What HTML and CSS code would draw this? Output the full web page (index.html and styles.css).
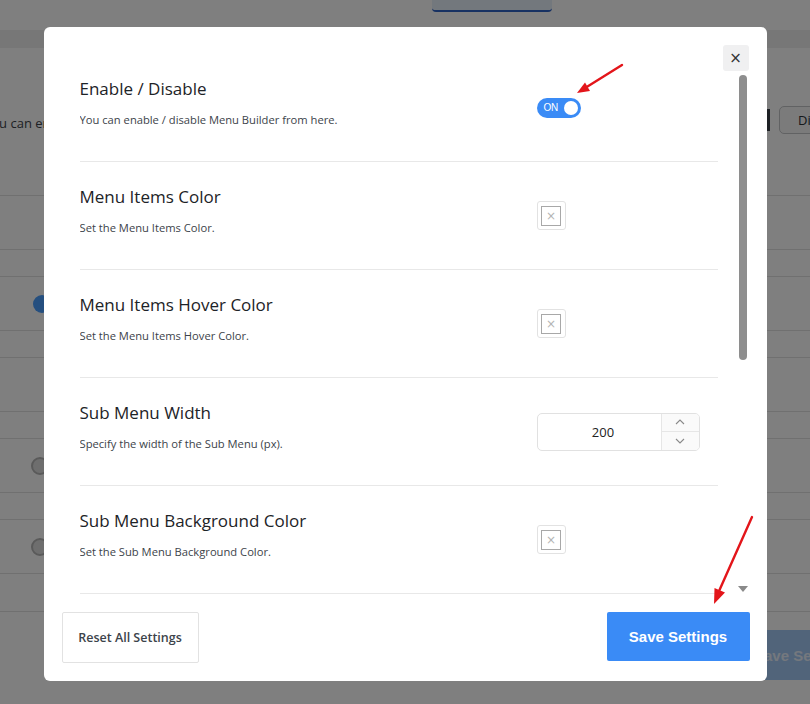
FILE: index.html
```html
<!DOCTYPE html>
<html lang="en">

<head>
  <meta charset="UTF-8" />
  <meta name="viewport" content="width=device-width, initial-scale=1.0" />
  <title>Menu Builder – Settings</title>
  <link rel="stylesheet" href="styles.css">
</head>

<body>
  <!-- admin page behind the modal -->
  <div class="page">
    <div class="topbar"><span class="tab"></span></div>
    <div class="band"></div>
    <div class="intro">
      <p>You can enable</p>
      <span class="edge"></span>
      <button class="bg-btn">Disable</button>
    </div>
    <div class="bg-table">
      <div class="bg-row tall"></div>
      <div class="bg-row short"></div>
      <div class="bg-row tall"><span class="bg-toggle"></span></div>
      <div class="bg-row short"></div>
      <div class="bg-row tall"></div>
      <div class="bg-row short"></div>
      <div class="bg-row tall"><span class="bg-radio"></span></div>
      <div class="bg-row short"></div>
      <div class="bg-row tall"><span class="bg-radio"></span></div>
      <div class="bg-row last"></div>
    </div>
    <div class="bg-footer">
      <button class="bg-save">Save Settings</button>
    </div>
  </div>

  <div class="backdrop">
    <div class="modal">
      <button class="close" aria-label="Close">&times;</button>

      <div class="modal-body">
        <div class="settings">
          <div class="setting">
            <div class="info">
              <h3>Enable / Disable</h3>
              <p>You can enable / disable Menu Builder from here.</p>
            </div>
            <div class="control">
              <span class="toggle"><span class="toggle-label">ON</span><span class="knob"></span></span>
            </div>
          </div>

          <div class="setting">
            <div class="info">
              <h3>Menu Items Color</h3>
              <p>Set the Menu Items Color.</p>
            </div>
            <div class="control">
              <span class="swatch"><span class="swatch-inner">&times;</span></span>
            </div>
          </div>

          <div class="setting">
            <div class="info">
              <h3>Menu Items Hover Color</h3>
              <p>Set the Menu Items Hover Color.</p>
            </div>
            <div class="control">
              <span class="swatch"><span class="swatch-inner">&times;</span></span>
            </div>
          </div>

          <div class="setting">
            <div class="info">
              <h3>Sub Menu Width</h3>
              <p>Specify the width of the Sub Menu (px).</p>
            </div>
            <div class="control">
              <div class="number">
                <span class="number-value">200</span>
                <div class="spin">
                  <span class="spin-btn">
                    <svg width="10" height="6" viewBox="0 0 10 6"><polyline points="1,5 5,1 9,5" fill="none" stroke="#8a8a8a" stroke-width="1.1"/></svg>
                  </span>
                  <span class="spin-btn">
                    <svg width="10" height="6" viewBox="0 0 10 6"><polyline points="1,1 5,5 9,1" fill="none" stroke="#8a8a8a" stroke-width="1.1"/></svg>
                  </span>
                </div>
              </div>
            </div>
          </div>

          <div class="setting">
            <div class="info">
              <h3>Sub Menu Background Color</h3>
              <p>Set the Sub Menu Background Color.</p>
            </div>
            <div class="control">
              <span class="swatch"><span class="swatch-inner">&times;</span></span>
            </div>
          </div>
        </div>

        <div class="scrollbar">
          <span class="thumb"></span>
          <span class="arrow-down"></span>
        </div>
      </div>

      <div class="modal-footer">
        <button class="btn-reset">Reset All Settings</button>
        <button class="btn-save">Save Settings</button>
      </div>
    </div>
  </div>

  <!-- red annotation arrows -->
  <svg class="annotations" width="810" height="704" viewBox="0 0 810 704">
    <line x1="622" y1="65" x2="587.5" y2="86.5" stroke="#e3151a" stroke-width="2.4" stroke-linecap="round" />
    <polygon points="577,93 590,91 585,82.5" fill="#e3151a" />
    <line x1="752" y1="517" x2="719.5" y2="590" stroke="#e3151a" stroke-width="2.4" stroke-linecap="round" />
    <polygon points="714,604 725,592.5 714.5,588" fill="#e3151a" />
  </svg>
</body>

</html>
```

FILE: styles.css
```css
  :root {
    --blue: #3a8bf6;
    --text: #1d2327;
    --muted: #3c434a;
    --line: #e8e8e8;
  }

  * {
    margin: 0;
    padding: 0;
    box-sizing: border-box;
  }

  body {
    font-family: 'Open Sans', 'Noto Sans', sans-serif;
    background-color: #fff;
    color: var(--text);
    width: 810px;
    height: 704px;
    overflow: hidden;
  }

  /* ---------- page behind ---------- */

  .page {
    width: 810px;
    height: 704px;
    overflow: hidden;
  }

  .topbar {
    height: 30px;
    background-color: #fefefe;
  }

  .tab {
    display: block;
    width: 120px;
    height: 12px;
    margin-left: 432px;
    background-color: #e6f0fb;
    border-bottom: 2px solid #2f63c4;
    border-radius: 0 0 4px 4px;
  }

  .band {
    height: 18px;
    background-color: #eeeeee;
  }

  .intro {
    height: 147px;
    display: flex;
    align-items: center;
    padding-bottom: 4px;
    overflow: hidden;
  }

  .intro p {
    margin-left: -16px;
    margin-top: 6px;
    font-size: 13px;
    color: #3c434a;
    white-space: nowrap;
  }

  .edge {
    margin-left: auto;
    width: 3px;
    height: 22px;
    background-color: #3c434a;
  }

  .bg-btn {
    width: 80px;
    margin-left: 9px;
    margin-right: -49px;
    height: 28px;
    padding-left: 18px;
    text-align: left;
    border: 1px solid #c3c4c7;
    border-radius: 5px;
    background-color: #f6f7f7;
    font-family: inherit;
    font-size: 13px;
    color: #2c3338;
  }

  .bg-table {
    border-top: 1px solid #e0e0e0;
  }

  .bg-row {
    display: flex;
    align-items: center;
    border-bottom: 1px solid #e0e0e0;
    padding-left: 31px;
  }

  .bg-row.tall { height: 54px; }
  .bg-row.short { height: 27px; }
  .bg-row.last { height: 38px; }

  .bg-toggle {
    width: 18px;
    height: 18px;
    border-radius: 50%;
    background-color: #4a9eff;
    margin-left: 2px;
  }

  .bg-radio {
    width: 18px;
    height: 18px;
    border-radius: 50%;
    border: 2px solid #b5b5b5;
    background-color: #ddd;
  }

  .bg-footer {
    display: flex;
    justify-content: flex-end;
    padding-top: 18px;
  }

  .bg-save {
    width: 70px;
    height: 50px;
    border: none;
    background-color: #a2c8f4;
    color: #e8f0fc;
    font-family: 'Liberation Sans', Arial, sans-serif;
    font-weight: bold;
    font-size: 15px;
    padding-left: 14px;
    white-space: nowrap;
    overflow: hidden;
    text-align: left;
  }

  /* ---------- modal ---------- */

  .backdrop {
    position: fixed;
    inset: 0;
    background-color: rgba(0, 0, 0, 0.5);
    display: flex;
    justify-content: center;
    align-items: flex-start;
    padding-top: 27px;
  }

  .modal {
    position: relative;
    width: 723px;
    height: 654px;
    background-color: #fff;
    border-radius: 6px;
    display: flex;
    flex-direction: column;
  }

  .close {
    position: absolute;
    top: 18px;
    right: 18px;
    width: 26px;
    height: 26px;
    border: none;
    border-radius: 3px;
    background-color: #f0f0f1;
    color: #333;
    font-family: 'DejaVu Sans', sans-serif;
    font-size: 15px;
    line-height: 26px;
  }

  .modal-body {
    height: 573px;
    display: flex;
    padding: 0 20px 0 36px;
    gap: 21px;
  }

  .settings {
    width: 638px;
    padding-top: 27px;
    overflow: hidden;
  }

  .setting {
    height: 108px;
    display: flex;
    align-items: center;
    border-bottom: 1px solid var(--line);
  }

  .info {
    width: 457px;
    display: flex;
    flex-direction: column;
    gap: 10px;
    padding-bottom: 9px;
  }

  .info h3 {
    font-size: 17px;
    font-weight: 400;
    line-height: 24px;
    color: var(--text);
  }

  .info p {
    font-size: 11.2px;
    line-height: 18px;
    color: var(--muted);
  }

  .control {
    display: flex;
    align-items: center;
  }

  .toggle {
    width: 44px;
    height: 20px;
    border-radius: 10px;
    background-color: var(--blue);
    display: flex;
    align-items: center;
    padding: 0 3px 0 7px;
    gap: 4px;
  }

  .toggle-label {
    font-family: 'Liberation Sans', Arial, sans-serif;
    font-size: 10px;
    color: #fff;
    letter-spacing: -0.3px;
  }

  .knob {
    width: 14px;
    height: 14px;
    border-radius: 50%;
    background-color: #fff;
    margin-left: auto;
  }

  .swatch {
    width: 29px;
    height: 29px;
    border: 1px solid #e2e2e2;
    border-radius: 3px;
    display: flex;
    align-items: center;
    justify-content: center;
  }

  .swatch-inner {
    width: 20px;
    height: 20px;
    border: 1px solid #a8a8a8;
    display: flex;
    align-items: center;
    justify-content: center;
    font-family: 'DejaVu Sans', sans-serif;
    font-size: 12px;
    line-height: 1;
    color: #b4b4b4;
  }

  .number {
    width: 163px;
    height: 38px;
    border: 1px solid #e1e1e1;
    border-radius: 5px;
    display: flex;
    overflow: hidden;
  }

  .number-value {
    flex: 1;
    display: flex;
    align-items: center;
    justify-content: center;
    padding-left: 8px;
    font-size: 13px;
    color: #222;
  }

  .spin {
    width: 38px;
    display: flex;
    flex-direction: column;
    border-left: 1px solid #e6e6e6;
    background-color: #fafafa;
  }

  .spin-btn {
    flex: 1;
    display: flex;
    align-items: center;
    justify-content: center;
  }

  .spin-btn + .spin-btn {
    border-top: 1px solid #e6e6e6;
  }

  .scrollbar {
    width: 8px;
    display: flex;
    flex-direction: column;
    align-items: center;
    padding-top: 48px;
    padding-bottom: 8px;
  }

  .thumb {
    width: 8px;
    height: 285px;
    border-radius: 4px;
    background-color: #8e8e8e;
  }

  .arrow-down {
    margin-top: auto;
    width: 0;
    height: 0;
    border-left: 5px solid transparent;
    border-right: 5px solid transparent;
    border-top: 6px solid #8a8a8a;
  }

  .modal-footer {
    flex: 1;
    display: flex;
    justify-content: space-between;
    align-items: flex-start;
    padding: 12px 17px 0 18px;
  }

  .btn-reset {
    width: 137px;
    height: 51px;
    border: 1px solid #e2e2e2;
    border-radius: 2px;
    background-color: #fff;
    font-family: 'Open Sans', sans-serif;
    font-weight: 600;
    font-size: 12.5px;
    color: #3c434a;
  }

  .btn-save {
    width: 143px;
    height: 49px;
    border: none;
    border-radius: 2px;
    background-color: var(--blue);
    font-family: 'Liberation Sans', Arial, sans-serif;
    font-weight: bold;
    font-size: 15px;
    color: #fff;
  }

  .annotations {
    position: fixed;
    top: 0;
    left: 0;
    pointer-events: none;
  }
```
